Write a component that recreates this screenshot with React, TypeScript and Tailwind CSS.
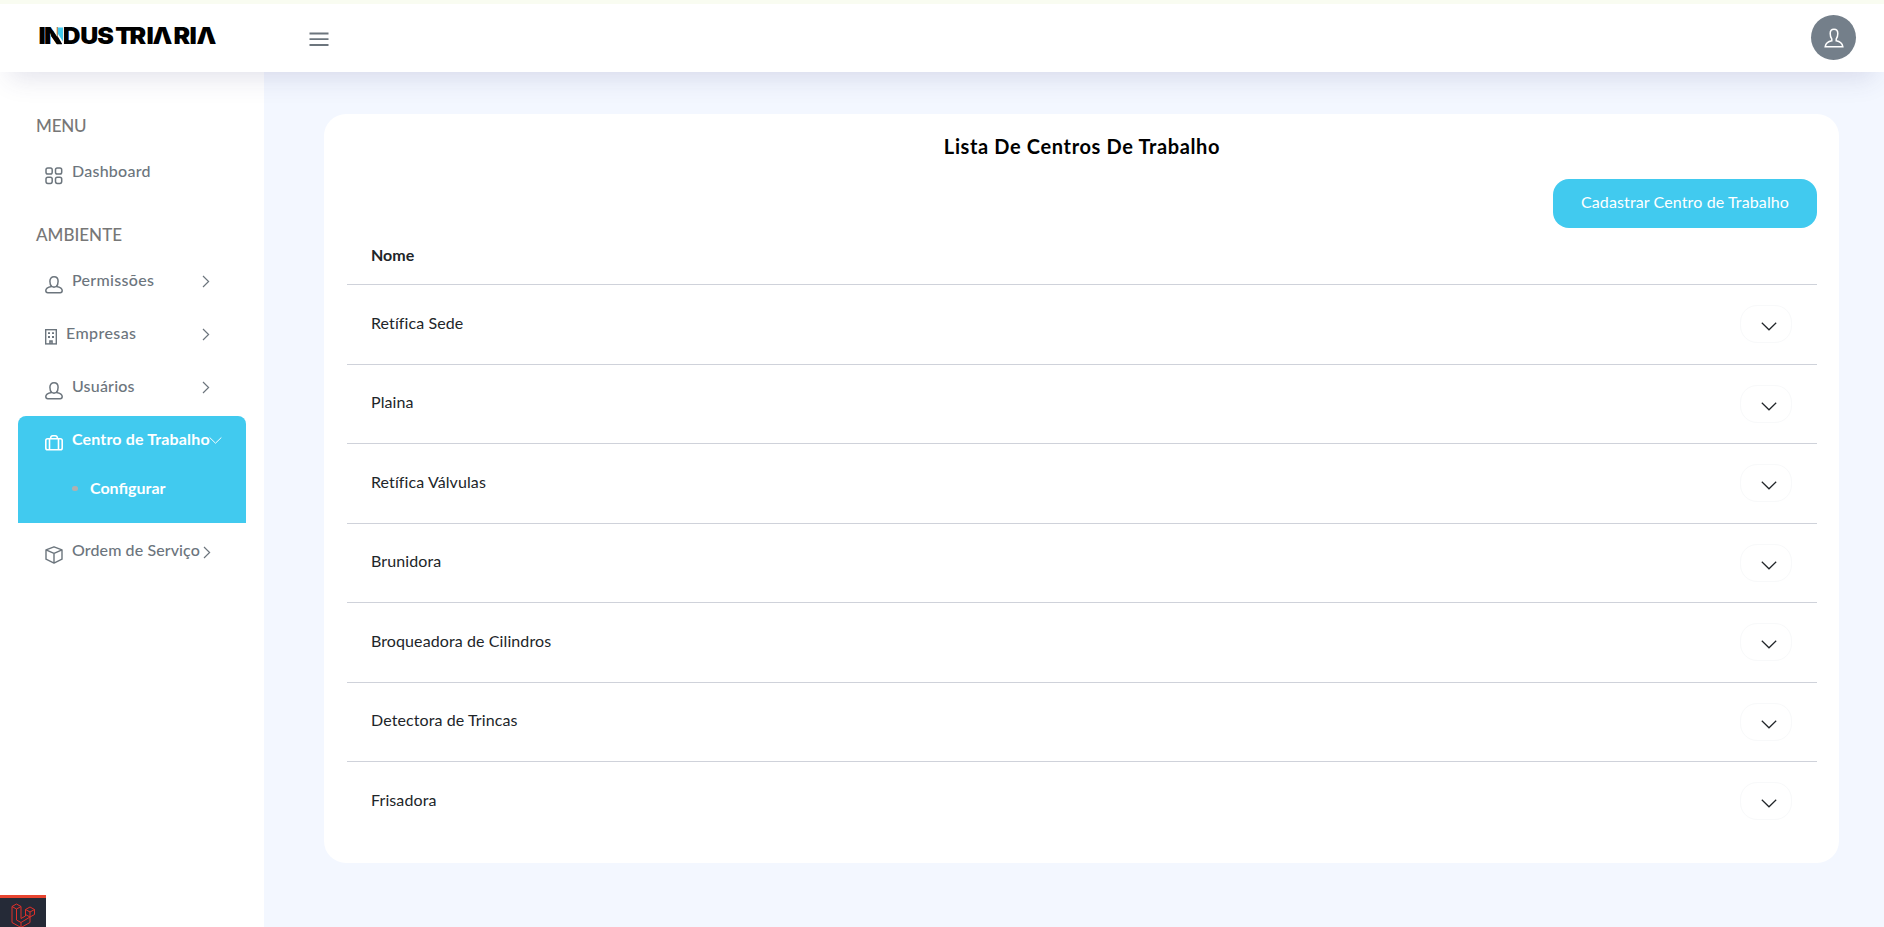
import React from "react";

const rows = [
  "Retífica Sede",
  "Plaina",
  "Retífica Válvulas",
  "Brunidora",
  "Broqueadora de Cilindros",
  "Detectora de Trincas",
  "Frisadora",
];

const Chevron = ({ className = "", down = false }: { className?: string; down?: boolean }) => (
  <svg
    className={className}
    width={down ? 16 : 8}
    height={down ? 9 : 13}
    viewBox={down ? "0 0 16 9" : "0 0 8 13"}
    fill="none"
    stroke="currentColor"
    strokeWidth="1.2"
  >
    <path d={down ? "M.8.8 8 7.8 15.2.8" : "M1 1l5.6 5.5L1 12"} />
  </svg>
);

const GridIcon = () => (
  <svg width="18" height="18" viewBox="0 0 18 18" fill="none" stroke="currentColor" strokeWidth="1.5">
    <rect x="1" y=".9" width="6.2" height="6.2" rx="1.8" />
    <rect x="10.5" y=".9" width="6.2" height="6.2" rx="1.8" />
    <rect x="1" y="10.2" width="6.2" height="6.2" rx="1.8" />
    <rect x="10.5" y="10.2" width="6.2" height="6.2" rx="1.8" />
  </svg>
);

const UserIcon = () => (
  <svg width="18" height="18" viewBox="0 0 18 18" fill="none" stroke="currentColor" strokeWidth="1.5">
    <path d="M6.6 10.3C5.2 9.2 4.9 7.4 4.9 5.3 4.9 2.6 6.5.8 9 .8s4.1 1.8 4.1 4.500c0 2.100-.3 3.900-1.700 5" />
    <path d="M6.6 10.4C3 11 .8 12.2.8 14.6.8 16.200 1.400 16.800 2.800 16.800h12.400c1.400 0 2-.6 2-2.200 0-2.400-2.200-3.600-5.800-4.200-1.500.9-3.300.9-4.800 0z" />
  </svg>
);

const BuildingIcon = () => (
  <svg width="12" height="16" viewBox="0 0 12 16" fill="none" stroke="currentColor" strokeWidth="1.4">
    <rect x=".7" y=".7" width="10.6" height="14.2" />
    <path d="M3 4.2h2M7 4.2h2M3 8h2M7 8h2" strokeWidth="1.8" />
    <path d="M5 15v-3h2v3" strokeWidth="1.6" />
  </svg>
);

const CaseIcon = () => (
  <svg width="18" height="16" viewBox="0 0 18 16" fill="none" stroke="currentColor" strokeWidth="1.6">
    <rect x=".8" y="3.8" width="16.4" height="11" rx="1.8" />
    <path d="M4.5 15V3.8M13.500 15V3.800M5.500 3.800C5.500 1.800 6.300.8 7.800.8h2.400c1.500 0 2.300 1 2.300 3" />
  </svg>
);

const BoxIcon = () => (
  <svg width="18" height="18" viewBox="0 0 18 18" fill="none" stroke="currentColor" strokeWidth="1.4" strokeLinejoin="round">
    <path d="M9 .8 1 3.9v9.3l8 3.9 8-3.9V3.9zM1 3.900l8 3.500 8-3.500M9 7.400v9.700" />
  </svg>
);

const NavItem = ({
  icon,
  label,
  className = "",
  textClass,
  chevronClass,
}: {
  icon: React.ReactNode;
  label: string;
  className?: string;
  textClass: string;
  chevronClass?: string;
}) => (
  <div className={`flex h-[53px] pl-[45px] text-[#6c757d] ${className}`}>
    <span className="pt-[8px]">{icon}</span>
    <span className={`shrink-0 whitespace-nowrap text-[16px] font-medium leading-6 ${textClass}`}>{label}</span>
    {chevronClass && <Chevron className={chevronClass} />}
  </div>
);

const letterStarts = [38.6, 44.1, 62.6, 80.3, 97.3, 115.2, 129.6, 146.5, 152.6, 173.4, 189.5, 196.4];

const Logo = () => (
  <svg width="200" height="32" viewBox="38 18 200 32" className="block overflow-visible">
    <text
      y="44"
      x={letterStarts.map((x) => (x / 1.1).toFixed(2)).join(" ")}
      transform="scale(1.1 1)"
      fontFamily="Inter"
      fontWeight="900"
      fontSize="22.7"
      fill="#000"
    >
      INDUSTRIΛRIΛ
    </text>
    <path d="M57.500 26.500h6.300V44.500h-1.300L57.500 36z" fill="#fff" />
    <path d="M52.500 30 62 44.200h-5L51 36z" fill="#000" />
    <path d="M58 27.500h5V41.500L58 34z" fill="#41caef" />
  </svg>
);

export default function App() {
  return (
    <div className="flex h-[927px] w-full flex-col overflow-hidden bg-[#f3f7ff] font-['Lato',sans-serif]">
      <div className="h-1 shrink-0 bg-[#f9fcf1]" />
      <header className="relative z-10 flex h-[68px] shrink-0 bg-white shadow-[0_16px_27px_-10px_rgba(60,60,120,0.15)]">
        <div className="w-[264px] pl-[38px] pt-[14px]">
          <Logo />
        </div>
        <svg className="ml-[45px] mt-[28px]" width="20" height="15" viewBox="0 0 20 15" stroke="#6c757d" strokeWidth="1.8">
          <path d="M.5 1.5h19M.5 7.2h19M.5 13h19" />
        </svg>
        <div className="ml-auto mr-[28px] mt-[11px] flex size-[45px] items-center justify-center rounded-full bg-[#747f8a] text-white">
          <svg width="20" height="20" viewBox="0 0 20 20" fill="none" stroke="currentColor" strokeWidth="1.5">
            <path d="M7.8 12.8V11C6.500 9.500 6.200 8 6.200 5.500 6.200 2.500 7.500 1.300 10 1.300s3.800 1.200 3.800 4.200c0 2.500-.3 4-1.600 5.500v1.800c3.600.6 6 2.200 6.600 5.900H1.200c.6-3.700 3-5.300 6.600-5.900z" />
          </svg>
        </div>
      </header>

      <div className="flex min-h-0 flex-1">
        <aside className="flex w-[264px] shrink-0 flex-col bg-white">
          <div className="pl-9 pt-[41px] text-[17px] font-medium leading-[26px] tracking-[-0.2px] text-[#777]">MENU</div>
          <NavItem icon={<GridIcon />} label="Dashboard" className="mt-[20px]" textClass="ml-[9px] tracking-[0.25px]" />
          <div className="mt-[10px] pl-9 text-[17px] font-medium leading-[26px] text-[#777]">AMBIENTE</div>
          <NavItem icon={<UserIcon />} label="Permissões" className="mt-[20px]" textClass="ml-[9px] w-[130px] tracking-[0.3px]" chevronClass="mt-[7px]" />
          <NavItem icon={<BuildingIcon />} label="Empresas" textClass="ml-[9px] w-[136px] tracking-[0.4px]" chevronClass="mt-[7px]" />
          <NavItem icon={<UserIcon />} label="Usuários" textClass="ml-[9px] w-[130px] tracking-[0.2px]" chevronClass="mt-[7px]" />
          <div className="ml-[18px] mt-[-11px] h-[107px] w-[228px] shrink-0 rounded-t-[8px] bg-[#41caef] pt-[11px] text-[16px] font-bold leading-6 text-white">
            <div className="flex pl-[27px]">
              <span className="pt-[8px]"><CaseIcon /></span>
              <span className="ml-[9px] w-[137px] whitespace-nowrap tracking-[0.15px]">Centro de Trabalho</span>
              <Chevron down className="mt-[9px] w-[13px]" />
            </div>
            <div className="mt-[25px] flex items-center pl-[54px]">
              <span className="h-[5px] w-[6px] rounded-full bg-[#b0b0b0]" />
              <span className="ml-[12px]">Configurar</span>
            </div>
          </div>
          <NavItem icon={<BoxIcon />} label="Ordem de Serviço" className="mt-[15px]" textClass="ml-[9px] w-[131px] tracking-[0.1px]" chevronClass="mt-[8px]" />
          <div className="mt-auto flex h-[32px] w-[46px] justify-center overflow-hidden border-t-[3px] border-[#e74430] bg-[#252a37] pt-[5px]">
            <svg width="24" height="26" viewBox="0 0 24 26" className="shrink-0" fill="none" stroke="#e0302a" strokeWidth="1">
              <path d="M1 3.5 5.5 1 10 3.5v12l4.500-2.500V6.500L19 4l4.500 2.500v5L19 14v5.500L10 24.500 1 19.500zM1 3.500 5.500 6 10 3.500M5.500 6v11l4.500 2.500 9-5.500M10 19.500v5M14.500 6.500 19 9l4.500-2.500M19 9v5l-4.500-2.500" />
            </svg>
          </div>
        </aside>

        <main className="flex-1 pl-[60px] pr-[45px] pt-[42px]">
          <section className="flex h-[749px] flex-col rounded-[22px] bg-white pl-[23px] pr-[22px] pt-[20px] text-[#212529]">
            <h1 className="text-center text-[20px] font-bold leading-6 tracking-[0.63px] text-black">Lista De Centros De Trabalho</h1>
            <button className="mt-[21px] h-[49px] w-[264px] shrink-0 self-end rounded-[16px] bg-[#41caef] pb-[4px] text-[16px] tracking-[0.12px] text-white">
              Cadastrar Centro de Trabalho
            </button>
            <div className="h-[56px] shrink-0 pl-[24px] pt-[15px] text-[16px] font-bold leading-6">Nome</div>
            {rows.map((name) => (
              <div key={name} className="flex h-[79.5px] shrink-0 justify-between border-t border-[#cfd2da] pl-[24px] pr-[25px] text-[16px] leading-6 tracking-[0.1px]">
                <span className="pt-[25.5px]">{name}</span>
                <span className="mt-[20px] flex h-[38px] w-[52px] rounded-[17px] border border-[#f8f9fa] pl-[20px] pt-[16px]">
                  <Chevron down />
                </span>
              </div>
            ))}
          </section>
        </main>
      </div>
    </div>
  );
}
